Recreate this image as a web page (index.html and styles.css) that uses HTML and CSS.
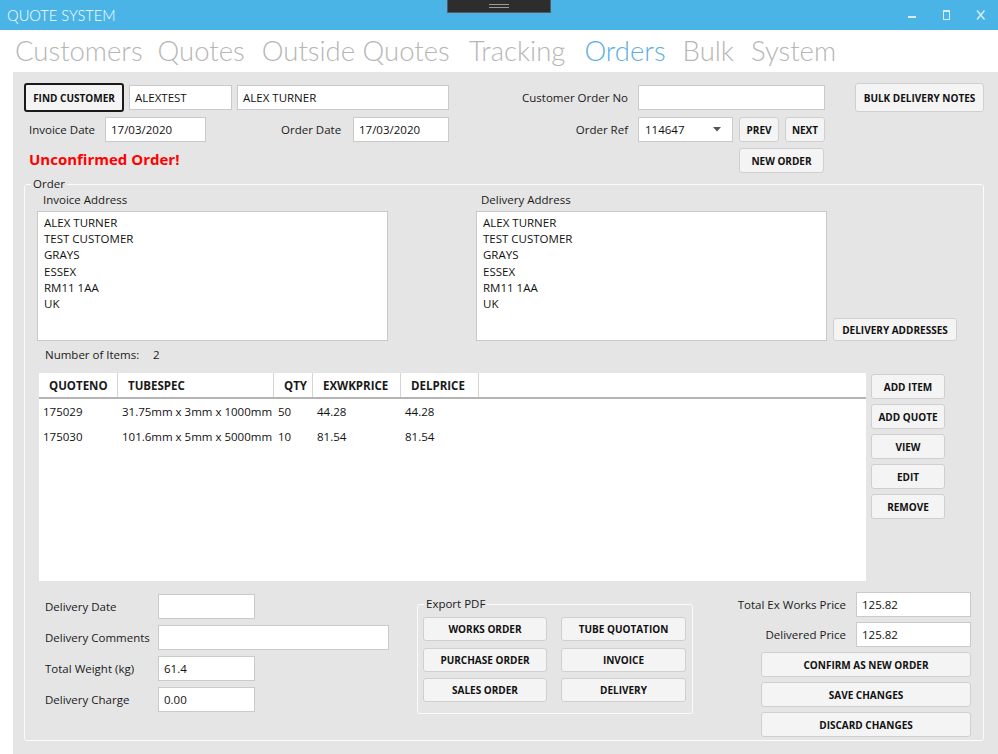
FILE: index.html
```html
<!DOCTYPE html>
<html>
<head>
<meta charset="utf-8">
<link rel="stylesheet" href="styles.css">
</head>
<body>
<div class="app">
  <header class="titlebar">
    <span class="app-title">QUOTE SYSTEM</span>
    <div class="grip"><span></span><span></span></div>
    <div class="win-controls">
      <div class="wc"><svg width="10" height="10" viewBox="0 0 10 10"><rect x="0" y="6" width="8" height="2" fill="#d8eefa"/></svg></div>
      <div class="wc"><svg width="10" height="10" viewBox="0 0 10 10"><rect x="1.5" y="0.5" width="6" height="9" fill="none" stroke="#d8eefa" stroke-width="1"/><rect x="1" y="0" width="7" height="2" fill="#d8eefa"/></svg></div>
      <div class="wc"><svg width="10" height="10" viewBox="0 0 10 10"><path d="M1 0.5L8.5 9.5M8.5 0.5L1 9.5" stroke="#d8eefa" stroke-width="1.4" fill="none"/></svg></div>
    </div>
  </header>

  <nav class="tabs">
    <span class="tab">Customers</span>
    <span class="tab">Quotes</span>
    <span class="tab">Outside Quotes</span>
    <span class="tab">Tracking</span>
    <span class="tab active">Orders</span>
    <span class="tab">Bulk</span>
    <span class="tab">System</span>
  </nav>

  <main class="panel">
    <section class="top">
      <div class="top-left">
        <div class="row r1">
          <button class="btn btn-focus find">FIND CUSTOMER</button>
          <div class="field w-code">ALEXTEST</div>
          <div class="field w-name">ALEX TURNER</div>
        </div>
        <div class="row r2">
          <span class="lbl lbl-inv">Invoice Date</span>
          <div class="field w-date1">17/03/2020</div>
          <span class="lbl lbl-ord">Order Date</span>
          <div class="field w-date2">17/03/2020</div>
        </div>
        <div class="warn">Unconfirmed Order!</div>
      </div>

      <div class="top-mid">
        <div class="row r1">
          <span class="rlbl">Customer Order No</span>
          <div class="field w-cust"></div>
        </div>
        <div class="row r2">
          <span class="rlbl">Order Ref</span>
          <div class="field combo"><span>114647</span><svg class="caret" width="8" height="5" viewBox="0 0 8 5"><path d="M0 0H8L4 4.5Z" fill="#555"/></svg></div>
          <button class="btn nav-btn">PREV</button>
          <button class="btn nav-btn">NEXT</button>
        </div>
        <div class="row r3">
          <button class="btn neworder">NEW ORDER</button>
        </div>
      </div>

      <div class="top-right">
        <button class="btn bulk">BULK DELIVERY NOTES</button>
      </div>
    </section>

    <fieldset class="group order">
      <legend>Order</legend>

      <div class="addr-row">
        <div class="addr-col inv">
          <div class="cap">Invoice Address</div>
          <div class="memo">ALEX TURNER<br>TEST CUSTOMER<br>GRAYS<br>ESSEX<br>RM11 1AA<br>UK</div>
        </div>
        <div class="addr-col del">
          <div class="cap">Delivery Address</div>
          <div class="memo">ALEX TURNER<br>TEST CUSTOMER<br>GRAYS<br>ESSEX<br>RM11 1AA<br>UK</div>
        </div>
        <button class="btn deliv-btn">DELIVERY ADDRESSES</button>
      </div>

      <div class="count"><span class="count-lbl">Number of Items:</span><span>2</span></div>

      <div class="items-row">
        <div class="grid">
          <div class="grid-head">
            <div class="hc">QUOTENO</div>
            <div class="hc">TUBESPEC</div>
            <div class="hc">QTY</div>
            <div class="hc">EXWKPRICE</div>
            <div class="hc">DELPRICE</div>
            <div class="hc last"></div>
          </div>
          <div class="grid-row">
            <div class="dc">175029</div>
            <div class="dc">31.75mm x 3mm x 1000mm</div>
            <div class="dc">50</div>
            <div class="dc">44.28</div>
            <div class="dc">44.28</div>
            <div class="dc"></div>
          </div>
          <div class="grid-row">
            <div class="dc">175030</div>
            <div class="dc">101.6mm x 5mm x 5000mm</div>
            <div class="dc">10</div>
            <div class="dc">81.54</div>
            <div class="dc">81.54</div>
            <div class="dc"></div>
          </div>
        </div>
        <div class="side-btns">
          <button class="btn">ADD ITEM</button>
          <button class="btn">ADD QUOTE</button>
          <button class="btn">VIEW</button>
          <button class="btn">EDIT</button>
          <button class="btn">REMOVE</button>
        </div>
      </div>

      <div class="bottom">
        <div class="deliv-form">
          <div class="frow"><span class="flbl">Delivery Date</span><div class="field f-short"></div></div>
          <div class="frow"><span class="flbl">Delivery Comments</span><div class="field f-long"></div></div>
          <div class="frow"><span class="flbl">Total Weight (kg)</span><div class="field f-short">61.4</div></div>
          <div class="frow"><span class="flbl">Delivery Charge</span><div class="field f-short">0.00</div></div>
        </div>

        <fieldset class="group export">
          <legend>Export PDF</legend>
          <div class="export-grid">
            <button class="btn">WORKS ORDER</button>
            <button class="btn">TUBE QUOTATION</button>
            <button class="btn">PURCHASE ORDER</button>
            <button class="btn">INVOICE</button>
            <button class="btn">SALES ORDER</button>
            <button class="btn">DELIVERY</button>
          </div>
        </fieldset>

        <div class="totals">
          <div class="trow"><span class="tlbl">Total Ex Works Price</span><div class="field t-field">125.82</div></div>
          <div class="trow"><span class="tlbl">Delivered Price</span><div class="field t-field">125.82</div></div>
          <button class="btn">CONFIRM AS NEW ORDER</button>
          <button class="btn">SAVE CHANGES</button>
          <button class="btn">DISCARD CHANGES</button>
        </div>
      </div>
    </fieldset>
  </main>
</div>
</body>
</html>
```

FILE: styles.css
```css
* { box-sizing: border-box; }
html, body { margin: 0; padding: 0; }
body {
  font-family: "Open Sans", "Noto Sans", sans-serif;
  font-size: 11.5px;
  color: #1a1a1a;
  background: #fff;
}
.app {
  width: 998px;
  height: 754px;
  overflow: hidden;
  display: flex;
  flex-direction: column;
}

/* title bar */
.titlebar {
  position: relative;
  height: 30px;
  flex: none;
  background: #4ab4e6;
  display: flex;
  align-items: center;
  color: #fff;
}
.app-title {
  padding-left: 7px;
  font-family: Lato, "Open Sans", sans-serif;
  font-weight: 300;
  font-size: 14.7px;
}
.grip {
  position: absolute;
  left: 447px;
  top: 0;
  width: 104px;
  height: 13px;
  background: #2d2d2d;
  border: 1px solid #5a5a5a;
  border-top: none;
  display: flex;
  flex-direction: column;
  align-items: center;
  justify-content: center;
  gap: 2px;
}
.grip span { display: block; width: 20px; height: 1px; background: #9a9a9a; }
.win-controls { margin-left: auto; display: flex; height: 30px; }
.wc { width: 34px; display: flex; align-items: center; justify-content: center; }

/* tabs */
.tabs {
  height: 42px;
  flex: none;
  display: flex;
  padding-left: 15px;
  font-family: Lato, "Open Sans", sans-serif;
  font-weight: 300;
  font-size: 27.5px;
  line-height: 42px;
  color: #b6b6b6;
  white-space: nowrap;
}
.tab:nth-child(2) { margin-left: 15px; }
.tab:nth-child(3) { margin-left: 17px; }
.tab:nth-child(4) { margin-left: 19px; }
.tab:nth-child(5) { margin-left: 19px; }
.tab:nth-child(6) { margin-left: 17px; }
.tab:nth-child(7) { margin-left: 17px; }
.tab.active { color: #5caee6; }

/* panel */
.panel {
  flex: 1;
  margin-left: 13px;
  background: #e5e5e5;
  padding: 11px 0 0 11px;
}

.field {
  height: 25px;
  background: #fff;
  border: 1px solid #cacaca;
  padding: 0 5px;
  display: flex;
  align-items: center;
  color: #111;
  white-space: nowrap;
}
.btn {
  font-family: "Open Sans", "Noto Sans", sans-serif;
  font-weight: 700;
  font-size: 10px;
  color: #111;
  background: #f4f4f4;
  border: 1px solid #cfcfcf;
  border-radius: 3px;
  padding: 0;
  margin: 0;
  height: 25px;
  display: flex;
  align-items: center;
  justify-content: center;
  white-space: nowrap;
}

/* top section */
.top { display: flex; height: 89px; }
.top .row { display: flex; align-items: center; }
.top .r1 { height: 29px; }
.top .r2 { height: 25px; margin-top: 5px; }
.top .r3 { height: 25px; margin-top: 6px; }

.top-left { width: 425px; }
.btn-focus { border: 2px solid #1a1a1a; }
.find { width: 100px; height: 29px; }
.w-code { width: 103px; margin-left: 5px; }
.w-name { width: 212px; margin-left: 5px; }
.lbl-inv { width: 81px; padding-left: 5px; }
.w-date1 { width: 101px; }
.lbl-ord { width: 72px; margin-left: 75px; }
.w-date2 { width: 96px; }
.warn {
  margin-top: 7px;
  padding-left: 5px;
  line-height: 20px;
  font-size: 15px;
  font-weight: 700;
  color: #ff0000;
}

.top-mid { margin-left: 49px; width: 337px; }
.rlbl { width: 140px; text-align: right; padding-right: 10px; white-space: nowrap; }
.w-cust { width: 187px; }
.combo { width: 95px; padding-left: 6px; justify-content: space-between; }
.caret { margin-right: 6px; }
.nav-btn { width: 40px; margin-left: 6px; }
.neworder { width: 85px; margin-left: 241px; }

.top-right { margin-left: 20px; }
.bulk { width: 129px; height: 29px; }

/* group boxes */
.group {
  margin: 0;
  padding: 0;
  min-width: 0;
  border: 1px solid #fbfbfb;
  border-radius: 3px;
}
.group > legend {
  margin-left: 6px;
  padding: 0 2px;
  line-height: 16px;
}
.order { width: 960px; margin-top: 4px; padding-bottom: 3px; }

.addr-row { display: flex; align-items: flex-end; margin-left: 12px; }
.addr-col { width: 351px; }
.addr-col.del { margin-left: 88px; }
.cap { line-height: 16px; margin-bottom: 3px; padding-left: 6px; }
.addr-col.del .cap { padding-left: 5px; }
.memo {
  height: 130px;
  background: #fff;
  border: 1px solid #cacaca;
  padding: 3px 6px;
  line-height: 16.2px;
  color: #111;
}
.deliv-btn { width: 124px; height: 23px; margin-left: 6px; }

.count { display: flex; margin: 6px 0 0 20px; line-height: 16px; }
.count-lbl { width: 108px; }

.items-row { display: flex; margin: 10px 0 0 14px; }
.grid { width: 827px; height: 208px; background: #fff; }
.grid-head, .grid-row {
  display: grid;
  grid-template-columns: 79px 156px 39px 88px 78px 1fr;
}
.grid-head { height: 26px; border-bottom: 2px solid #b4b4b4; }
.hc {
  display: flex;
  align-items: center;
  padding-left: 10px;
  font-weight: 700;
  border-right: 1px solid #d5d5d5;
}
.hc.last { border-right: none; }
.grid-row { height: 25px; }
.dc { display: flex; align-items: center; padding-left: 4px; color: #111; white-space: nowrap; }

.side-btns { display: flex; flex-direction: column; gap: 5px; margin-left: 5px; padding-top: 1px; }
.side-btns .btn { width: 74px; }

/* bottom */
.bottom { display: flex; align-items: flex-start; margin-top: 11px; }
.deliv-form { margin-left: 20px; padding-top: 2px; display: flex; flex-direction: column; gap: 6px; }
.frow { display: flex; align-items: center; height: 25px; }
.flbl { width: 113px; white-space: nowrap; }
.f-short { width: 97px; }
.f-long { width: 231px; }

.export { width: 276px; margin-left: 28px; margin-top: 4px; padding: 5px 5px 11px 5px; }
.export > legend { margin-left: 1px; }
.export-grid {
  display: grid;
  grid-template-columns: 124px 125px;
  column-gap: 14px;
  grid-auto-rows: 24px;
  row-gap: 6.5px;
}
.export-grid .btn { height: 24px; }

.totals {
  margin-left: auto;
  margin-right: 12px;
  width: 210px;
  display: flex;
  flex-direction: column;
  gap: 5px;
}
.trow { display: flex; justify-content: flex-end; align-items: center; height: 25px; }
.tlbl { margin-right: 10px; white-space: nowrap; }
.t-field { width: 115px; flex: none; }
```
